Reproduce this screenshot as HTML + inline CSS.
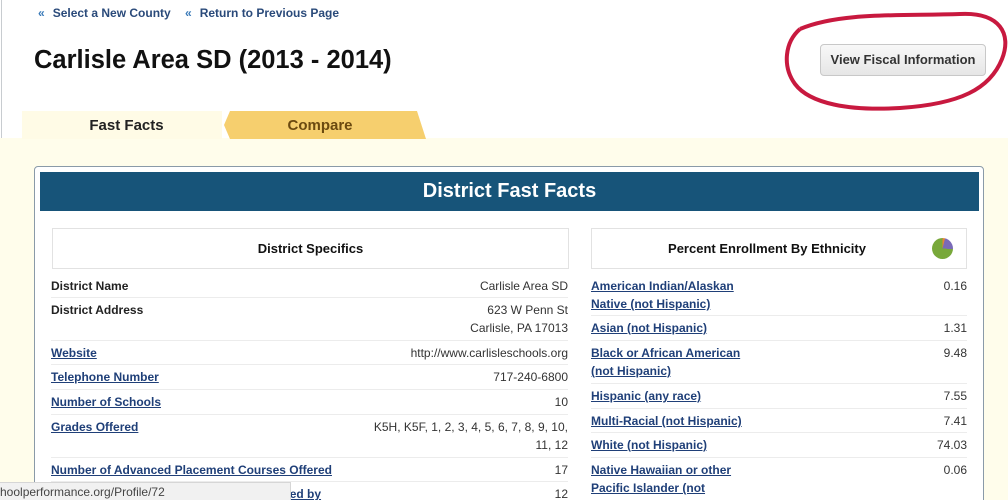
<!DOCTYPE html>
<html><head><style>
html,body{margin:0;width:1008px;height:500px;overflow:hidden}
body{background:#fff;font-family:"Liberation Sans",Arial,sans-serif;position:relative}
.a{position:absolute;white-space:nowrap}
.nav{font-size:12px;font-weight:bold;color:#2a4a7a;top:6px}
.nav b{color:#3a7ab8;font-size:12px;margin-right:8px}
.l{font-size:12px;font-weight:bold;color:#1f3f78;text-decoration:underline;line-height:18px}
.k{font-size:12px;font-weight:bold;color:#222;line-height:18px}
.v{font-size:12px;color:#333;line-height:18px;text-align:right}
.sep{position:absolute;height:1px;background:#ececec}
</style></head><body>
<div class="a" style="left:1px;top:0;width:1px;height:500px;background:#c8ccd0"></div>
<div class="a nav" style="left:38px"><b>«</b>Select a New County</div>
<div class="a nav" style="left:185px"><b>«</b>Return to Previous Page</div>
<div class="a" style="left:34px;top:46px;font-size:25.5px;font-weight:bold;color:#111">Carlisle Area SD (2013 - 2014)</div>
<div class="a" style="left:820px;top:44px;width:164px;height:30px;border:1px solid #c8c8c8;border-radius:4px;background:linear-gradient(#f8f8f8,#e6e6e6);font-size:13px;font-weight:bold;color:#333;text-align:center;line-height:30px">View Fiscal Information</div>
<svg class="a" style="left:780px;top:4px" width="228" height="110"><path d="M20 25 C60 8 120 12 180 10 C220 8 232 30 222 55 C210 85 180 100 120 104 C70 107 30 100 15 80 C2 62 5 38 20 25" fill="none" stroke="#c8193f" stroke-width="4"/></svg>
<div class="a" style="left:0;top:138px;width:1008px;height:362px;background:#fffdeb"></div>
<div class="a" style="left:22px;top:111px;width:200px;height:28px;background:#fffbe6"></div>
<div class="a" style="left:34px;top:117px;width:185px;text-align:center;font-size:15px;font-weight:bold;color:#222">Fast Facts</div>
<svg class="a" style="left:222px;top:111px" width="205" height="29"><path d="M8 0 L195 0 L204 28 L8 28 L2 14 Z" fill="#f6cf6e"/></svg>
<div class="a" style="left:225px;top:117px;width:190px;text-align:center;font-size:15px;font-weight:bold;color:#6b4a10">Compare</div>
<div class="a" style="left:34px;top:166px;width:948px;height:340px;border:1px solid #8a9aa8;border-radius:4px;background:#fff"></div>
<div class="a" style="left:40px;top:172px;width:939px;height:39px;background:#175479;color:#fff;font-size:20px;font-weight:bold;text-align:center;line-height:39px">District Fast Facts</div>
<div class="a" style="left:52px;top:228px;width:515px;height:39px;border:1px solid #e2e2e2;text-align:center;line-height:39px;font-size:13px;font-weight:bold;color:#111">District Specifics</div>
<div class="a" style="left:591px;top:228px;width:374px;height:39px;border:1px solid #e2e2e2;line-height:39px;font-size:13px;font-weight:bold;color:#111"><span style="position:absolute;left:0;width:350px;text-align:center">Percent Enrollment By Ethnicity</span></div>
<div class="a" style="left:932px;top:238px;width:21px;height:21px;border-radius:50%;background:conic-gradient(#e2833a 0 4%,#7a6ab8 4% 26%,#78a83a 26%)"></div>

<div class="a k" style="left:51px;top:277px">District Name</div><div class="a v" style="right:440px;top:277px">Carlisle Area SD</div>
<div class="a k" style="left:51px;top:301px">District Address</div><div class="a v" style="right:440px;top:301px">623 W Penn St<br>Carlisle, PA 17013</div>
<div class="a l" style="left:51px;top:344px">Website</div><div class="a v" style="right:440px;top:344px">http://www.carlisleschools.org</div>
<div class="a l" style="left:51px;top:368px">Telephone Number</div><div class="a v" style="right:440px;top:368px">717-240-6800</div>
<div class="a l" style="left:51px;top:393px">Number of Schools</div><div class="a v" style="right:440px;top:393px">10</div>
<div class="a l" style="left:51px;top:418px">Grades Offered</div><div class="a v" style="right:440px;top:418px">K5H, K5F, 1, 2, 3, 4, 5, 6, 7, 8, 9, 10,<br>11, 12</div>
<div class="a l" style="left:51px;top:461px">Number of Advanced Placement Courses Offered</div><div class="a v" style="right:440px;top:461px">17</div>
<div class="a l" style="left:51px;top:485px">Number of Dual Enrollment Courses Offered by</div><div class="a v" style="right:440px;top:485px">12</div>
<div class="sep" style="left:51px;top:297px;width:517px"></div><div class="sep" style="left:51px;top:340px;width:517px"></div><div class="sep" style="left:51px;top:364px;width:517px"></div><div class="sep" style="left:51px;top:389px;width:517px"></div><div class="sep" style="left:51px;top:414px;width:517px"></div><div class="sep" style="left:51px;top:457px;width:517px"></div><div class="sep" style="left:51px;top:481px;width:517px"></div>

<div class="a l" style="left:591px;top:277px">American Indian/Alaskan<br>Native (not Hispanic)</div><div class="a v" style="right:41px;top:277px">0.16</div>
<div class="a l" style="left:591px;top:319px">Asian (not Hispanic)</div><div class="a v" style="right:41px;top:319px">1.31</div>
<div class="a l" style="left:591px;top:344px">Black or African American<br>(not Hispanic)</div><div class="a v" style="right:41px;top:344px">9.48</div>
<div class="a l" style="left:591px;top:387px">Hispanic (any race)</div><div class="a v" style="right:41px;top:387px">7.55</div>
<div class="a l" style="left:591px;top:412px">Multi-Racial (not Hispanic)</div><div class="a v" style="right:41px;top:412px">7.41</div>
<div class="a l" style="left:591px;top:436px">White (not Hispanic)</div><div class="a v" style="right:41px;top:436px">74.03</div>
<div class="a l" style="left:591px;top:461px">Native Hawaiian or other<br>Pacific Islander (not</div><div class="a v" style="right:41px;top:461px">0.06</div>
<div class="sep" style="left:591px;top:315px;width:376px"></div><div class="sep" style="left:591px;top:340px;width:376px"></div><div class="sep" style="left:591px;top:383px;width:376px"></div><div class="sep" style="left:591px;top:408px;width:376px"></div><div class="sep" style="left:591px;top:432px;width:376px"></div><div class="sep" style="left:591px;top:457px;width:376px"></div>

<div class="a" style="left:0;top:482px;width:290px;height:18px;background:#f1f1f1;border:1px solid #d6d6d6;border-left:none;font-size:12px;color:#444;line-height:18px">hoolperformance.org/Profile/72</div>
</body></html>
